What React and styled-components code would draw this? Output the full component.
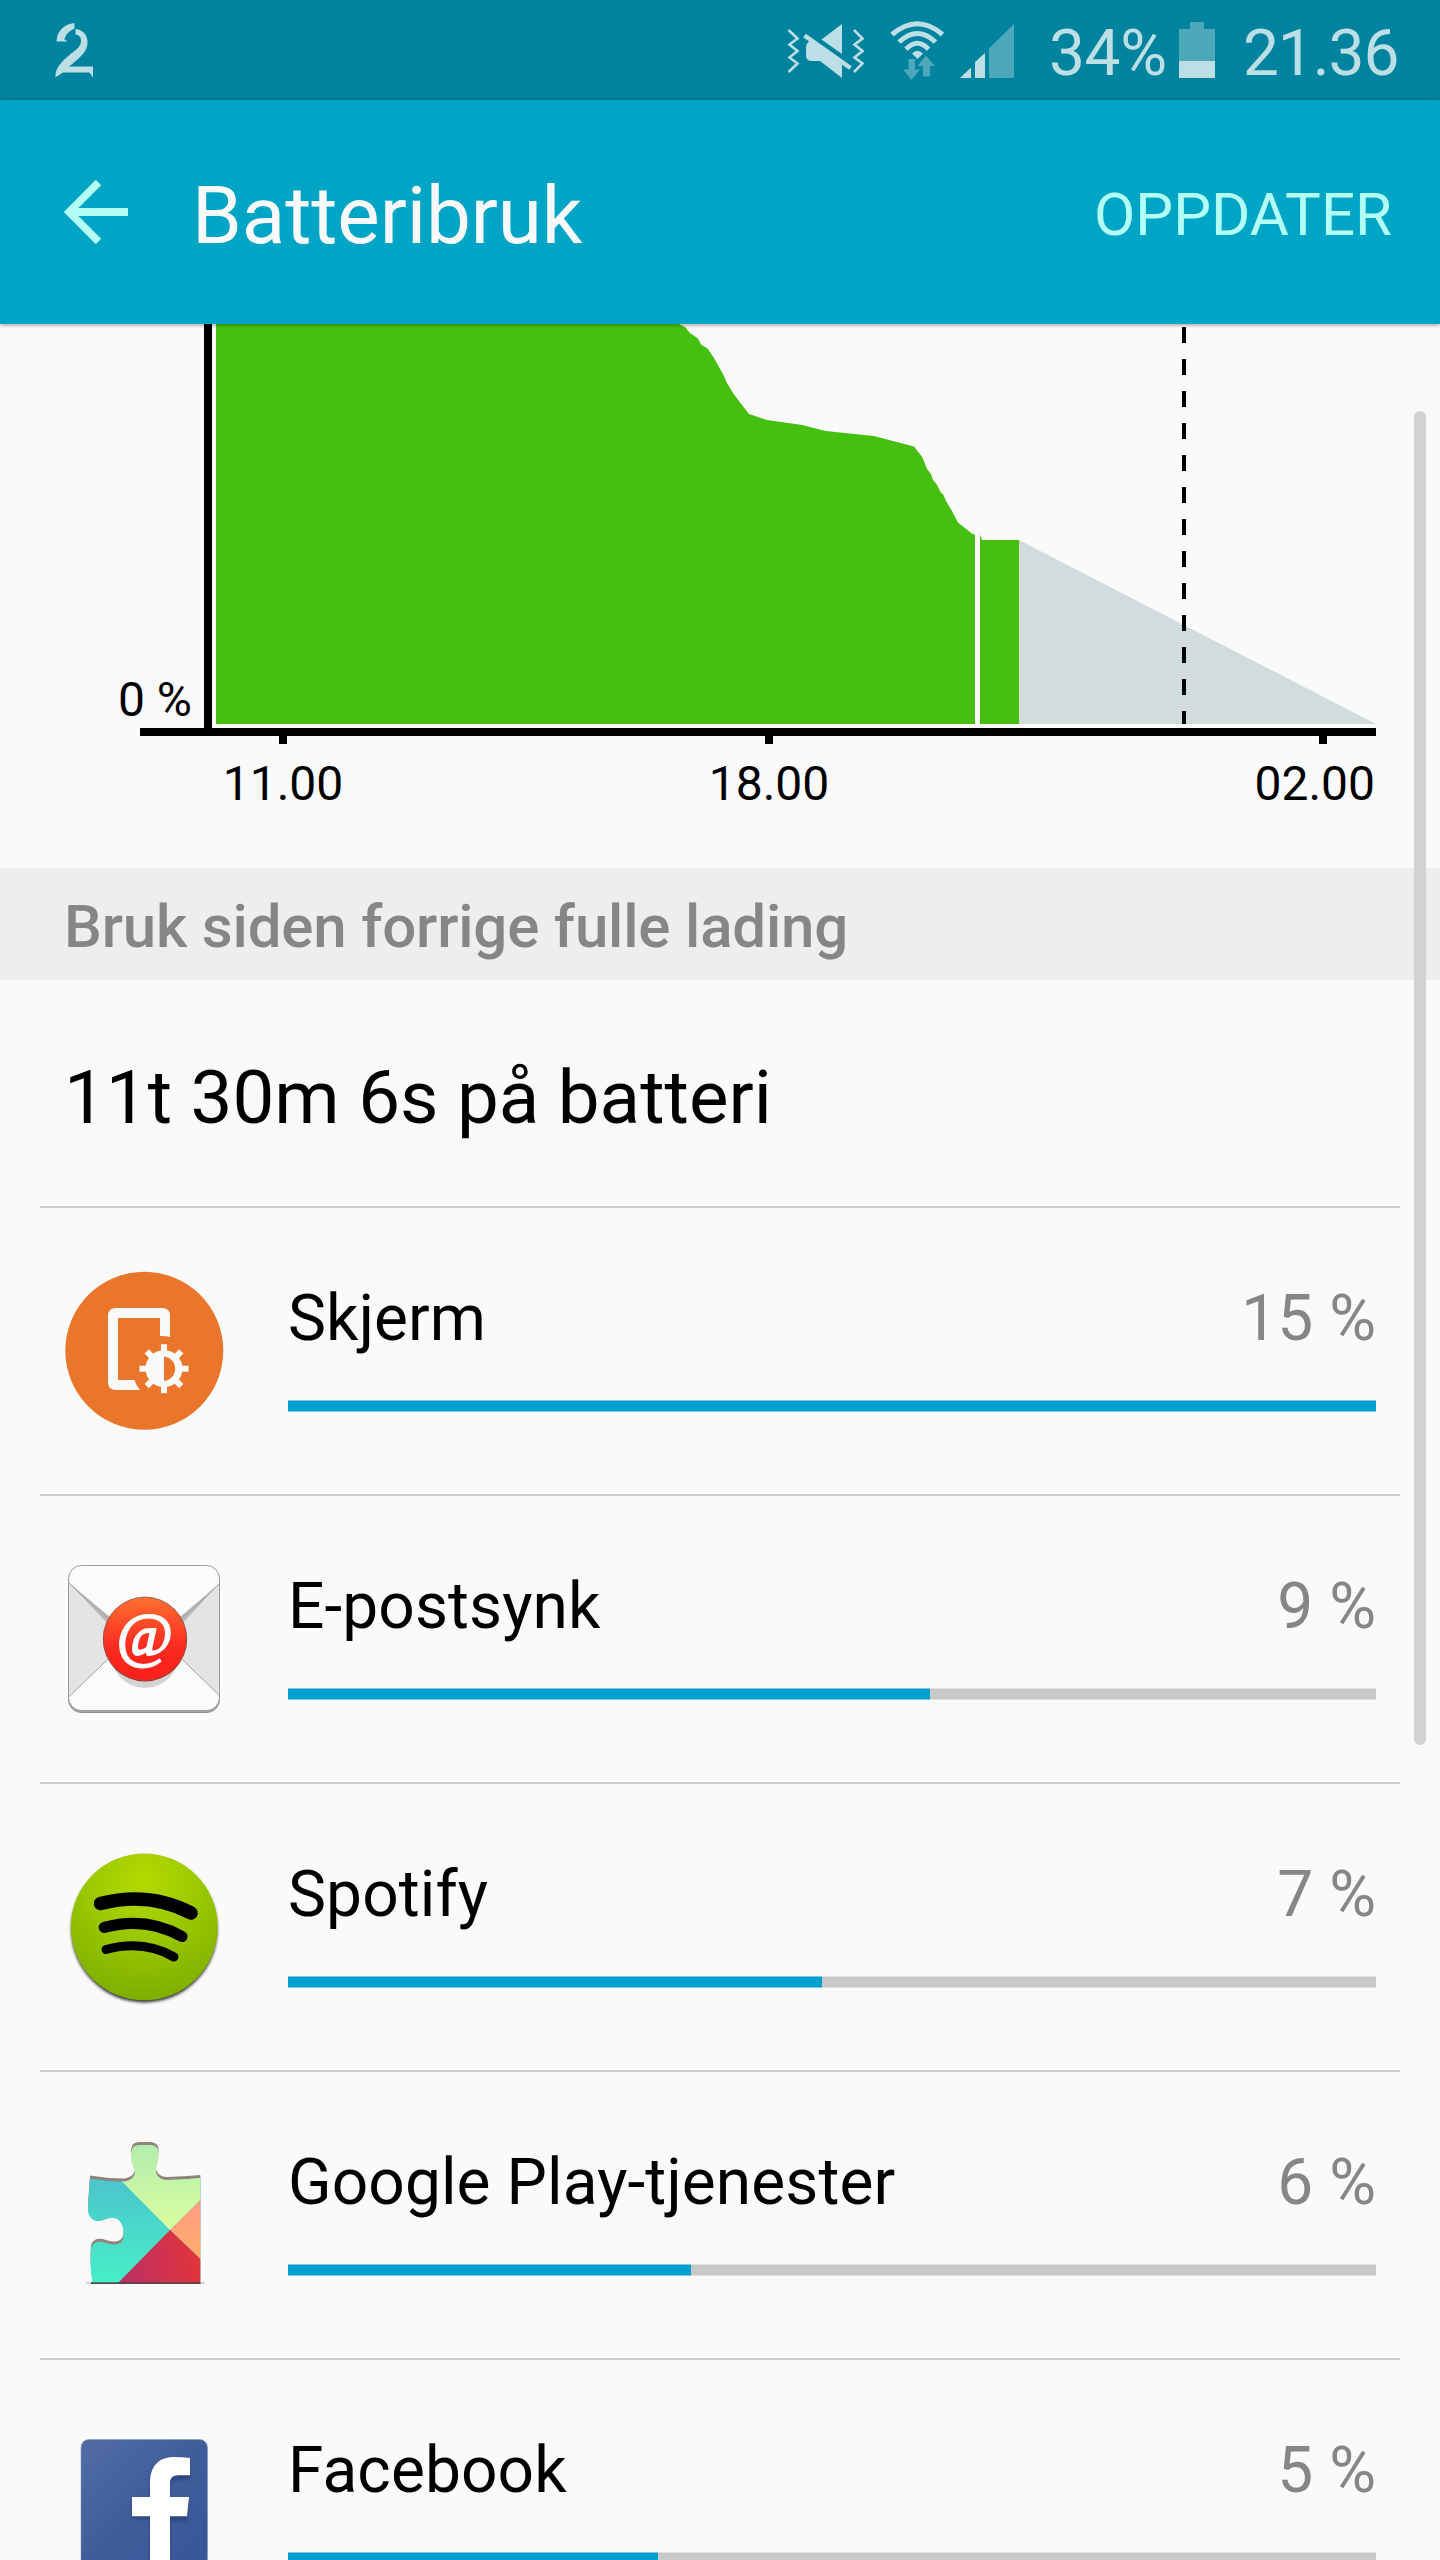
import React from 'react';
import styled, { createGlobalStyle } from 'styled-components';

const GlobalStyle = createGlobalStyle`
  *, *::before, *::after { box-sizing: border-box; }
  html, body { margin: 0; padding: 0; }
  body {
    background: #fafafa;
    font-family: Roboto, "Noto Sans", sans-serif;
    color: #000;
    overflow: hidden;
  }
  svg { display: block; flex: none; }
`;

const Screen = styled.div`
  position: relative;
  display: flex;
  flex-direction: column;
  width: 1440px;
  height: 2560px;
  overflow: hidden;
  background: #fafafa;
`;

const StatusBar = styled.header`
  display: flex;
  flex: none;
  align-items: center;
  justify-content: space-between;
  height: 100px;
  background: #00839e;
  color: #bcdfe6;
`;

const StatusGroup = styled.div`
  display: flex;
  align-items: center;
  height: 100%;
`;

const StatusText = styled.span`
  width: ${(p) => p.$width}px;
  padding-top: 8px;
  margin-left: ${(p) => p.$gap}px;
  font-size: 64px;
  line-height: 76px;
  letter-spacing: ${(p) => p.$tracking || 0}px;
  white-space: nowrap;
`;

const AppBar = styled.nav`
  position: relative;
  z-index: 1;
  display: flex;
  flex: none;
  align-items: center;
  height: 224px;
  padding: 0 48px 0 64px;
  background: #00a5c5;
  box-shadow: 0 1px 4px rgba(0, 0, 0, 0.4);
`;

const Title = styled.h1`
  flex: 1;
  margin: 0 0 0 57px;
  padding-top: 8px;
  font-size: 80px;
  font-weight: 400;
  line-height: 96px;
  letter-spacing: -0.1px;
  color: #fafafa;
`;

const RefreshButton = styled.button`
  padding: 5px 0 0;
  border: 0;
  background: none;
  font: 400 60px/72px Roboto, sans-serif;
  color: #b2fff5;
`;

const ChartArea = styled.section`
  flex: none;
  height: 544px;
`;

const ChartLabel = styled.text`
  font-size: 48px;
  fill: #000;
`;

const SectionHeader = styled.h2`
  flex: none;
  height: 112px;
  margin: 0;
  padding: 3px 64px 0;
  background: #eeeeee;
  font-size: 60px;
  font-weight: 500;
  line-height: 112px;
  letter-spacing: -0.17px;
  color: #868686;
`;

const Uptime = styled.p`
  flex: none;
  height: 226px;
  margin: 0;
  padding: 10px 64px 0;
  font-size: 74.5px;
  line-height: 216px;
`;

const UsageList = styled.ul`
  flex: none;
  margin: 0 40px;
  padding: 0;
  list-style: none;
`;

const UsageRow = styled.li`
  display: flex;
  gap: 64px;
  height: 288px;
  padding: 63px 24px 0;
  border-top: 2px solid #cdcdcd;
`;

const UsageBody = styled.div`
  flex: 1;
  padding-top: 10px;
`;

const UsageLine = styled.div`
  display: flex;
  justify-content: space-between;
  font-size: 64px;
  line-height: 76px;
`;

const AppName = styled.span`
  letter-spacing: 0.1px;
`;

const Percent = styled.span`
  color: #868686;
`;

const Track = styled.div`
  height: 12px;
  margin-top: 43px;
  background: linear-gradient(#e0e0e0 1px, #c8c8c8 1px 11px, #e0e0e0 11px);
`;

const Fill = styled.div`
  width: ${(p) => p.$width}px;
  height: 12px;
  background: linear-gradient(#7cc9e2 1px, #00a0d0 1px 11px, #7cc9e2 11px);
`;

const ScrollThumb = styled.div`
  position: absolute;
  top: 411px;
  right: 14px;
  width: 12px;
  height: 1334px;
  border-radius: 6px;
  background: #d1d2d4;
`;

const DIM = '#4da8ba';
const LIT = '#bcdfe6';

function TvLogo() {
  return (
    <svg width="120" height="100" viewBox="0 0 120 100" fill={LIT}>
      <path d="M74.5 23C64 24 57 31 56.500 41.500L67.500 41.500L64.500 39.500C65.500 34 69.500 31 74.500 28.500Z" />
      <path d="M75.500 29C84 30 88 36 87.500 43.500C87 50 83 54.500 78 59C72 64.500 67 68 63.500 72C60 75 57.500 75.500 55.500 77.500C54.800 69.500 60 63.500 66 58C73 51.500 81 48 81 41C81 36 78.500 35 75.500 34.500Z" />
      <path d="M68 66.500H93V77.500L89.500 72.500H62Z" />
    </svg>
  );
}

function MuteIcon() {
  return (
    <svg width="108" height="100" viewBox="780 0 108 100" fill="none">
      <path d="M842 24V54L821.500 39.500Z" fill={LIT} />
      <path d="M810 41C807.500 42 806 44.500 806 48V55Q806 61 812 61H820L842 78V64.500L811 41Z" fill={LIT} />
      <path d="M804.500 35.500L850.500 68" stroke={LIT} strokeWidth="4.500" />
      <path d="M788.500 30L797.500 38.500L789.500 44.500L797.500 51L789.500 57.500L797.500 63.500L788.500 72" stroke={LIT} strokeWidth="2.600" />
      <path d="M854 30L862.500 38.500L854.500 44.500L862.500 51L854.500 57.500L862.500 63.500L854 72" stroke={LIT} strokeWidth="2.600" />
    </svg>
  );
}

function WifiIcon() {
  return (
    <svg width="64" height="100" viewBox="888 0 64 100" fill="none">
      <g stroke={LIT} strokeWidth="5">
        <path d="M892 34.500Q917.500 13 942.500 34.500" />
        <path d="M899 42Q917.500 25 935.500 42" />
        <path d="M906 49.200Q917.500 37.500 928.500 49.200" />
      </g>
      <path d="M912 53.500Q917.500 48 923 53.500L917.500 59Z" fill={LIT} />
      <path d="M908.500 59H915V69.500H920L911.500 80L903 69.500H908.500Z" fill={DIM} />
      <path d="M926 55.500L935 66H930V76.500H923V66H917.500Z" fill={DIM} />
    </svg>
  );
}

function SignalIcon() {
  return (
    <svg width="68" height="100" viewBox="952 0 68 100">
      <path d="M960 78L971 67.500V78Z" fill={LIT} />
      <path d="M975 78V62L985 53V78Z" fill={LIT} />
      <path d="M989 78V48.500L1014 24V78Z" fill={DIM} />
    </svg>
  );
}

function BatteryIcon() {
  return (
    <svg width="36" height="100" viewBox="0 0 36 100">
      <path d="M0 61V29H11V22H25V29H36V61Z" fill={DIM} />
      <path d="M0 61H36V78H0Z" fill={LIT} />
    </svg>
  );
}

function BackArrow() {
  return (
    <svg width="71" height="66" viewBox="0 0 71 66" fill="none" stroke="#b2fff5">
      <path d="M6 33H64" strokeWidth="8" />
      <path d="M34.500 3.500L5 33L34.500 62.500" strokeWidth="7.500" />
    </svg>
  );
}

const LEVEL_CURVE =
  '679,324 685,327 690,333 698,338.500 701,344.500 707.500,348.500 714,358 723.500,375 727,383 734,394.500 749,414 767,420 802.500,425 825.500,431 874,436 914,446.500 922.500,457.500 927,469 931,474 933,480 936.500,484 940.500,492 943.500,495 946,501 952,511 958,522.500 972.500,534 975,534.500';

function LevelChart() {
  return (
    <svg width="1440" height="544" viewBox="0 324 1440 544">
      <polygon points={`216,724 216,324 ${LEVEL_CURVE} 975,724`} fill="#46c010" />
      <polygon points="980,724 980,534.500 982,540 1019,540 1019,724" fill="#46c010" />
      <polygon points="1019,540 1376,724 1019,724" fill="#d3dcdd" />
      <path d="M1184 327V724" stroke="#000" strokeWidth="4" strokeDasharray="16 16" />
      <path d="M204 324H212V728H1376V736H1327V744H1319V736H773V744H765V736H287V744H279V736H140V728H204Z" />
      <ChartLabel x="192" y="716" textAnchor="end">0 %</ChartLabel>
      <ChartLabel x="283" y="800" textAnchor="middle">11.00</ChartLabel>
      <ChartLabel x="769" y="800" textAnchor="middle">18.00</ChartLabel>
      <ChartLabel x="1375" y="800" textAnchor="end">02.00</ChartLabel>
    </svg>
  );
}

function ScreenIcon() {
  return (
    <svg width="160" height="160" viewBox="0 0 160 160">
      <circle cx="80.300" cy="79.700" r="79" fill="#e9762b" />
      <path
        d="M52 37H98Q106 37 106 45V66Q101 64.500 96 65V47H54V109H70.500Q72 114.500 76 119H52Q44 119 44 111V45Q44 37 52 37Z"
        fill="#fafafa"
      />
      <g fill="#fafafa">
        {[0, 45, 90, 135].map((a) => (
          <rect key={a} x="97" y="73.200" width="6" height="49" transform={`rotate(${a} 100 97.700)`} />
        ))}
        <circle cx="100" cy="97.700" r="18.500" />
      </g>
      <path d="M100 85.500A12.300 12.300 0 0 1 100 110Z" fill="#e9762b" />
    </svg>
  );
}

const MailGlyph = styled.text`
  font-family: "Liberation Serif", serif;
  font-style: italic;
  font-size: 61px;
  fill: #fff;
  stroke: #fff;
  stroke-width: 2px;
`;

function MailIcon() {
  return (
    <svg width="160" height="160" viewBox="0 0 160 160">
      <defs>
        <linearGradient id="mailSeal" x1="0" y1="0" x2="0" y2="1">
          <stop offset="0" stopColor="#ff7030" />
          <stop offset="0.600" stopColor="#fb2a20" />
          <stop offset="1" stopColor="#fa1f1a" />
        </linearGradient>
      </defs>
      <rect x="4.500" y="8" width="151" height="145.500" rx="13" fill="#a8a8a8" stroke="#8c8c8c" />
      <rect x="4.500" y="6.500" width="151" height="145" rx="13" fill="#fbfbfb" stroke="#9a9a9a" />
      <path d="M5 24L64 80L5 137.500Z" fill="#e4e4e4" />
      <path d="M155 25L98 80L155 136Z" fill="#e4e4e4" />
      <path d="M5 24L46 58V67Z M155 25L116 58V67Z" fill="#b8b8b8" />
      <path d="M5 24L60 74M155 25L100 76M5 137.500L60 85M155 136L102 85" stroke="#a2a2a2" strokeWidth="1" />
      <ellipse cx="81" cy="92" rx="35" ry="37" fill="#d3d3d3" />
      <circle cx="81" cy="80.500" r="42" fill="#b91c16" />
      <circle cx="81" cy="79.800" r="41.700" fill="url(#mailSeal)" stroke="#875a4c" strokeWidth="0.800" />
      <MailGlyph x="80.500" y="96" textAnchor="middle">@</MailGlyph>
    </svg>
  );
}

function SpotifyIcon() {
  return (
    <svg width="160" height="160" viewBox="0 0 160 160">
      <defs>
        <radialGradient id="spotifyDisc" cx="0.500" cy="0.180" r="0.820">
          <stop offset="0" stopColor="#b4d900" />
          <stop offset="0.500" stopColor="#99c700" />
          <stop offset="1" stopColor="#7eaf00" />
        </radialGradient>
        <filter id="spotifyShade" x="-10%" y="-10%" width="120%" height="120%">
          <feGaussianBlur stdDeviation="1.600" />
        </filter>
      </defs>
      <circle cx="80.300" cy="82.500" r="73" fill="#333" filter="url(#spotifyShade)" />
      <circle cx="80.300" cy="79.900" r="73.400" fill="url(#spotifyDisc)" />
      <g fill="none" stroke="#000" strokeLinecap="round">
        <path d="M36.500 56.500Q85 44 127 66" strokeWidth="13.500" />
        <path d="M40.300 80.300Q82 69 118 89.500" strokeWidth="11.200" />
        <path d="M42 102.500Q80 92.500 110 110" strokeWidth="9" />
      </g>
    </svg>
  );
}

const PUZZLE =
  'M26 43.500Q43 46.500 60 46.500C68 45.500 73 40 70 34C67.500 28 66 21 67.500 16Q68.500 10 75 10H87Q94 10.500 94.500 17C95 24 93 29 92 34C91 40 96 45 103 45Q120 44.500 136.300 43V147.700H28.300Q25.500 128 27 113C29 107 34 106 39 107C46 109.500 54 111.500 58 106C61 100 59.500 92 57 88C53 81.500 46 82.500 41 84.500C36 86.500 31 87 27.500 83.500Q23.500 80 24 72Z';

function PlayServicesIcon() {
  return (
    <svg width="160" height="160" viewBox="0 0 160 160">
      <defs>
        <clipPath id="puzzle">
          <path d={PUZZLE} />
        </clipPath>
        <linearGradient id="teal" x1="0" y1="0" x2="0" y2="1">
          <stop offset="0" stopColor="#4cc3cc" />
          <stop offset="1" stopColor="#47efc7" />
        </linearGradient>
        <linearGradient id="lime" x1="0" y1="0" x2="0" y2="1">
          <stop offset="0" stopColor="#aeeaae" />
          <stop offset="1" stopColor="#daff9f" />
        </linearGradient>
        <linearGradient id="peach" x1="0" y1="0" x2="0" y2="1">
          <stop offset="0" stopColor="#ff9a86" />
          <stop offset="1" stopColor="#ffb068" />
        </linearGradient>
        <linearGradient id="crimson" x1="0" y1="0.500" x2="1" y2="0.400">
          <stop offset="0" stopColor="#bb3066" />
          <stop offset="1" stopColor="#e23438" />
        </linearGradient>
      </defs>
      <path d="M22 148H141" stroke="#c9c9c9" strokeWidth="1.500" />
      <path d={PUZZLE} fill="#91827c" transform="translate(0 -3)" />
      <path d="M27 148H136.500" stroke="#5b4449" strokeWidth="2" />
      <g clipPath="url(#puzzle)">
        <rect x="20" y="40" width="120" height="108" fill="url(#teal)" />
        <path d="M106 95L46 34.500V0H137V64.500Z" fill="url(#lime)" />
        <path d="M106 95L137 64.500V124.500Z" fill="url(#peach)" />
        <path d="M106 95L137 124.500V148H54Z" fill="url(#crimson)" />
      </g>
      <path d="M28 147.500H136.500" stroke="#22211f" strokeOpacity="0.400" strokeWidth="1.200" />
    </svg>
  );
}

function FacebookIcon() {
  return (
    <svg width="160" height="160" viewBox="0 0 160 160">
      <defs>
        <linearGradient id="fbTile" x1="0" y1="0" x2="1" y2="1">
          <stop offset="0" stopColor="#526da5" />
          <stop offset="0.500" stopColor="#405d9b" />
          <stop offset="1" stopColor="#385697" />
        </linearGradient>
        <filter id="fbShade" x="-10%" y="-10%" width="120%" height="120%">
          <feGaussianBlur stdDeviation="1.500" />
        </filter>
      </defs>
      <rect x="17" y="16.500" width="126.500" height="127" rx="8" fill="url(#fbTile)" stroke="#8494b8" strokeWidth="0.600" />
      <path
        d="M86 144V93.700H68V74H86V60C86 43 95 34 110 34Q119 34 126 35V54H114Q106 54 106 62V74H125L123 95.700H106V144Z"
        fill="#1c3468"
        opacity="0.550"
        transform="translate(0 2.500)"
        filter="url(#fbShade)"
      />
      <path
        d="M86 144V93.300H68V74H86V60C86 43 95 34 110 34Q119 34 126 35V52.300H114Q106 52.300 106 60V74H125L123 93.300H106V144Z"
        fill="#fff"
      />
    </svg>
  );
}

const USAGE = [
  { name: 'Skjerm', percent: '15 %', width: 1088, Icon: ScreenIcon },
  { name: 'E-postsynk', percent: '9 %', width: 642, Icon: MailIcon },
  { name: 'Spotify', percent: '7 %', width: 534, Icon: SpotifyIcon },
  { name: 'Google Play-tjenester', percent: '6 %', width: 403, Icon: PlayServicesIcon },
  { name: 'Facebook', percent: '5 %', width: 370, Icon: FacebookIcon },
];

export default function App() {
  return (
    <>
      <GlobalStyle />
      <Screen>
        <StatusBar>
          <TvLogo />
          <StatusGroup>
            <MuteIcon />
            <WifiIcon />
            <SignalIcon />
            <StatusText $gap={29} $width={130} $tracking={-0.4}>34%</StatusText>
            <BatteryIcon />
            <StatusText $gap={28} $width={197} $tracking={-1.1}>21.36</StatusText>
          </StatusGroup>
        </StatusBar>
        <AppBar>
          <BackArrow />
          <Title>Batteribruk</Title>
          <RefreshButton>OPPDATER</RefreshButton>
        </AppBar>
        <ChartArea>
          <LevelChart />
        </ChartArea>
        <SectionHeader>Bruk siden forrige fulle lading</SectionHeader>
        <Uptime>11t 30m 6s på batteri</Uptime>
        <UsageList>
          {USAGE.map(({ name, percent, width, Icon }) => (
            <UsageRow key={name}>
              <Icon />
              <UsageBody>
                <UsageLine>
                  <AppName>{name}</AppName>
                  <Percent>{percent}</Percent>
                </UsageLine>
                <Track>
                  <Fill $width={width} />
                </Track>
              </UsageBody>
            </UsageRow>
          ))}
        </UsageList>
        <ScrollThumb />
      </Screen>
    </>
  );
}
